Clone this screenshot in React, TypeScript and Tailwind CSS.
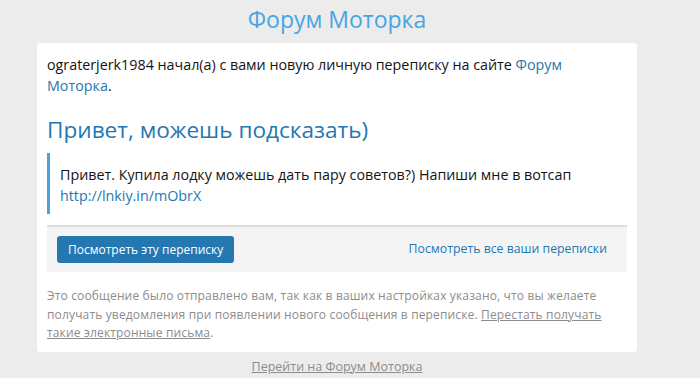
export default function App() {
  return (
    <div
      className="min-h-[378px] w-full bg-[#ececec] text-[#141414]"
      style={{ fontFamily: '"Open Sans", "Noto Sans", sans-serif' }}
    >
      <div className="w-[674px]">
        <div className="pt-[4px] text-center text-[23px] leading-[30px] text-[#47a5e6]">
          Форум Моторка
        </div>

        <div className="mx-auto mt-[9px] w-[600px] rounded-[3px] bg-white px-[10px] pt-[11px] pb-[9px]">
          <p className="max-w-[570px] text-[14.3px] leading-[21px]">
            ograterjerk1984 начал(а) с вами новую личную переписку на сайте{' '}
            <a className="text-[#2577b1]">Форум Моторка</a>.
          </p>

          <h2 className="mt-[19px] text-[22.6px] leading-[30px] text-[#2577b1]">
            Привет, можешь подсказать)
          </h2>

          <div className="mt-[8px] border-l-[3px] border-[#4aa3df] pt-[11px] pb-[8px] pl-[10px] text-[14.3px] leading-[21px]">
            Привет. Купила лодку можешь дать пару советов?) Напиши мне в вотсап{' '}
            <a className="text-[#2577b1]">http://lnkiy.in/mObrX</a>
          </div>

          <div className="mt-[11px] flex items-center justify-between border-t-2 border-[#dcdcdc] bg-[#f4f4f4] py-[9px] pl-[10px] pr-[20px]">
            <button className="rounded-[3px] bg-[#2577b1] px-[11px] text-[12px] leading-[27px] text-white">
              Посмотреть эту переписку
            </button>
            <a className="text-[12.3px] text-[#2577b1]">Посмотреть все ваши переписки</a>
          </div>

          <p className="mt-[15px] whitespace-nowrap text-[12px] leading-[18.5px] tracking-[0.15px] text-[#8c8c8c]">
            Это сообщение было отправлено вам, так как в ваших настройках указано, что вы желаете
            <br />
            получать уведомления при появлении нового сообщения в переписке.{' '}
            <a className="underline">Перестать получать</a>
            <br />
            <a className="underline">такие электронные письма</a>.
          </p>
        </div>

        <div className="pt-[6px] text-center text-[12.5px] leading-[18px] text-[#8c8c8c]">
          <a className="underline">Перейти на Форум Моторка</a>
        </div>
      </div>
    </div>
  );
}
